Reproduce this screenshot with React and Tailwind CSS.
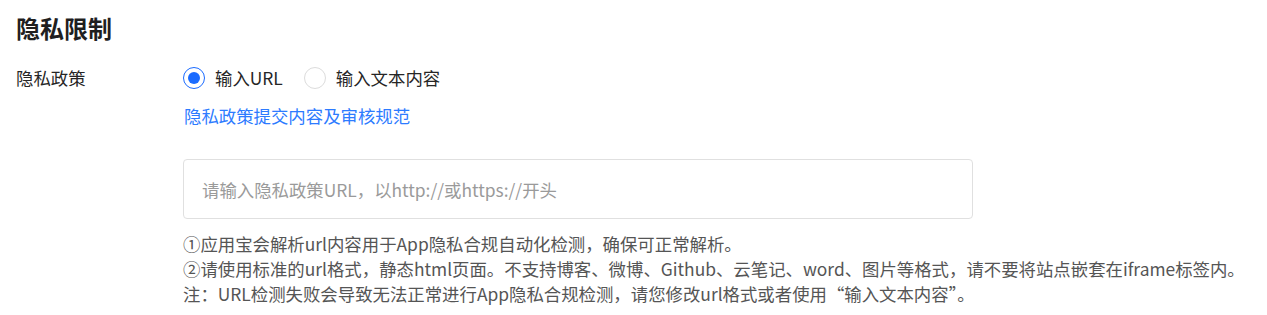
import React, { useState } from 'react';

const font = { fontFamily: '"Noto Sans CJK SC", "Noto Sans", sans-serif' };

const Radio = ({ checked, label, onClick }) => (
    <label className="flex items-center gap-[10px] cursor-pointer" onClick={onClick}>
        <span
            className={
                'w-[22px] h-[22px] rounded-full border flex items-center justify-center bg-white ' +
                (checked ? 'border-[#1a6bff]' : 'border-[#dcdcdc]')
            }
        >
            {checked && <span className="w-[12px] h-[12px] rounded-full bg-[#1a6bff]" />}
        </span>
        <span className="text-[17.4px] text-[#262626]">{label}</span>
    </label>
);

export default function App() {
    const [mode, setMode] = useState('url');
    return (
        <div className="bg-white w-[1267px] h-[315px] px-4 pt-[12px]" style={font}>
            <h2 className="text-[24px] font-bold text-[#1f1f1f] leading-[32px]">隐私限制</h2>
            <div className="flex mt-[21px]">
                <div className="w-[167px] text-[17.4px] text-[#262626] leading-[26px]">隐私政策</div>
                <div className="flex flex-col">
                    <div className="flex items-center gap-[21px] h-[26px]">
                        <Radio checked={mode === 'url'} label="输入URL" onClick={() => setMode('url')} />
                        <Radio checked={mode === 'text'} label="输入文本内容" onClick={() => setMode('text')} />
                    </div>
                    <a className="mt-[12px] text-[17.4px] text-[#2d7bff] leading-[26px] pl-px">隐私政策提交内容及审核规范</a>
                    <input
                        className="mt-[30px] w-[790px] h-[60px] border border-[#e0e0e0] rounded-[4px] px-[18px] text-[17.4px] text-[#262626] placeholder:text-[#9a9a9a] outline-none"
                        placeholder="请输入隐私政策URL，以http://或https://开头"
                    />
                    <div className="mt-[12px] text-[17.4px] text-[#555555] leading-[25px] whitespace-nowrap">
                        <p>①应用宝会解析url内容用于App隐私合规自动化检测，确保可正常解析。</p>
                        <p>②请使用标准的url格式，静态html页面。不支持博客、微博、Github、云笔记、word、图片等格式，请不要将站点嵌套在iframe标签内。</p>
                        <p>注：URL检测失败会导致无法正常进行App隐私合规检测，请您修改url格式或者使用“输入文本内容”。</p>
                    </div>
                </div>
            </div>
        </div>
    );
}
